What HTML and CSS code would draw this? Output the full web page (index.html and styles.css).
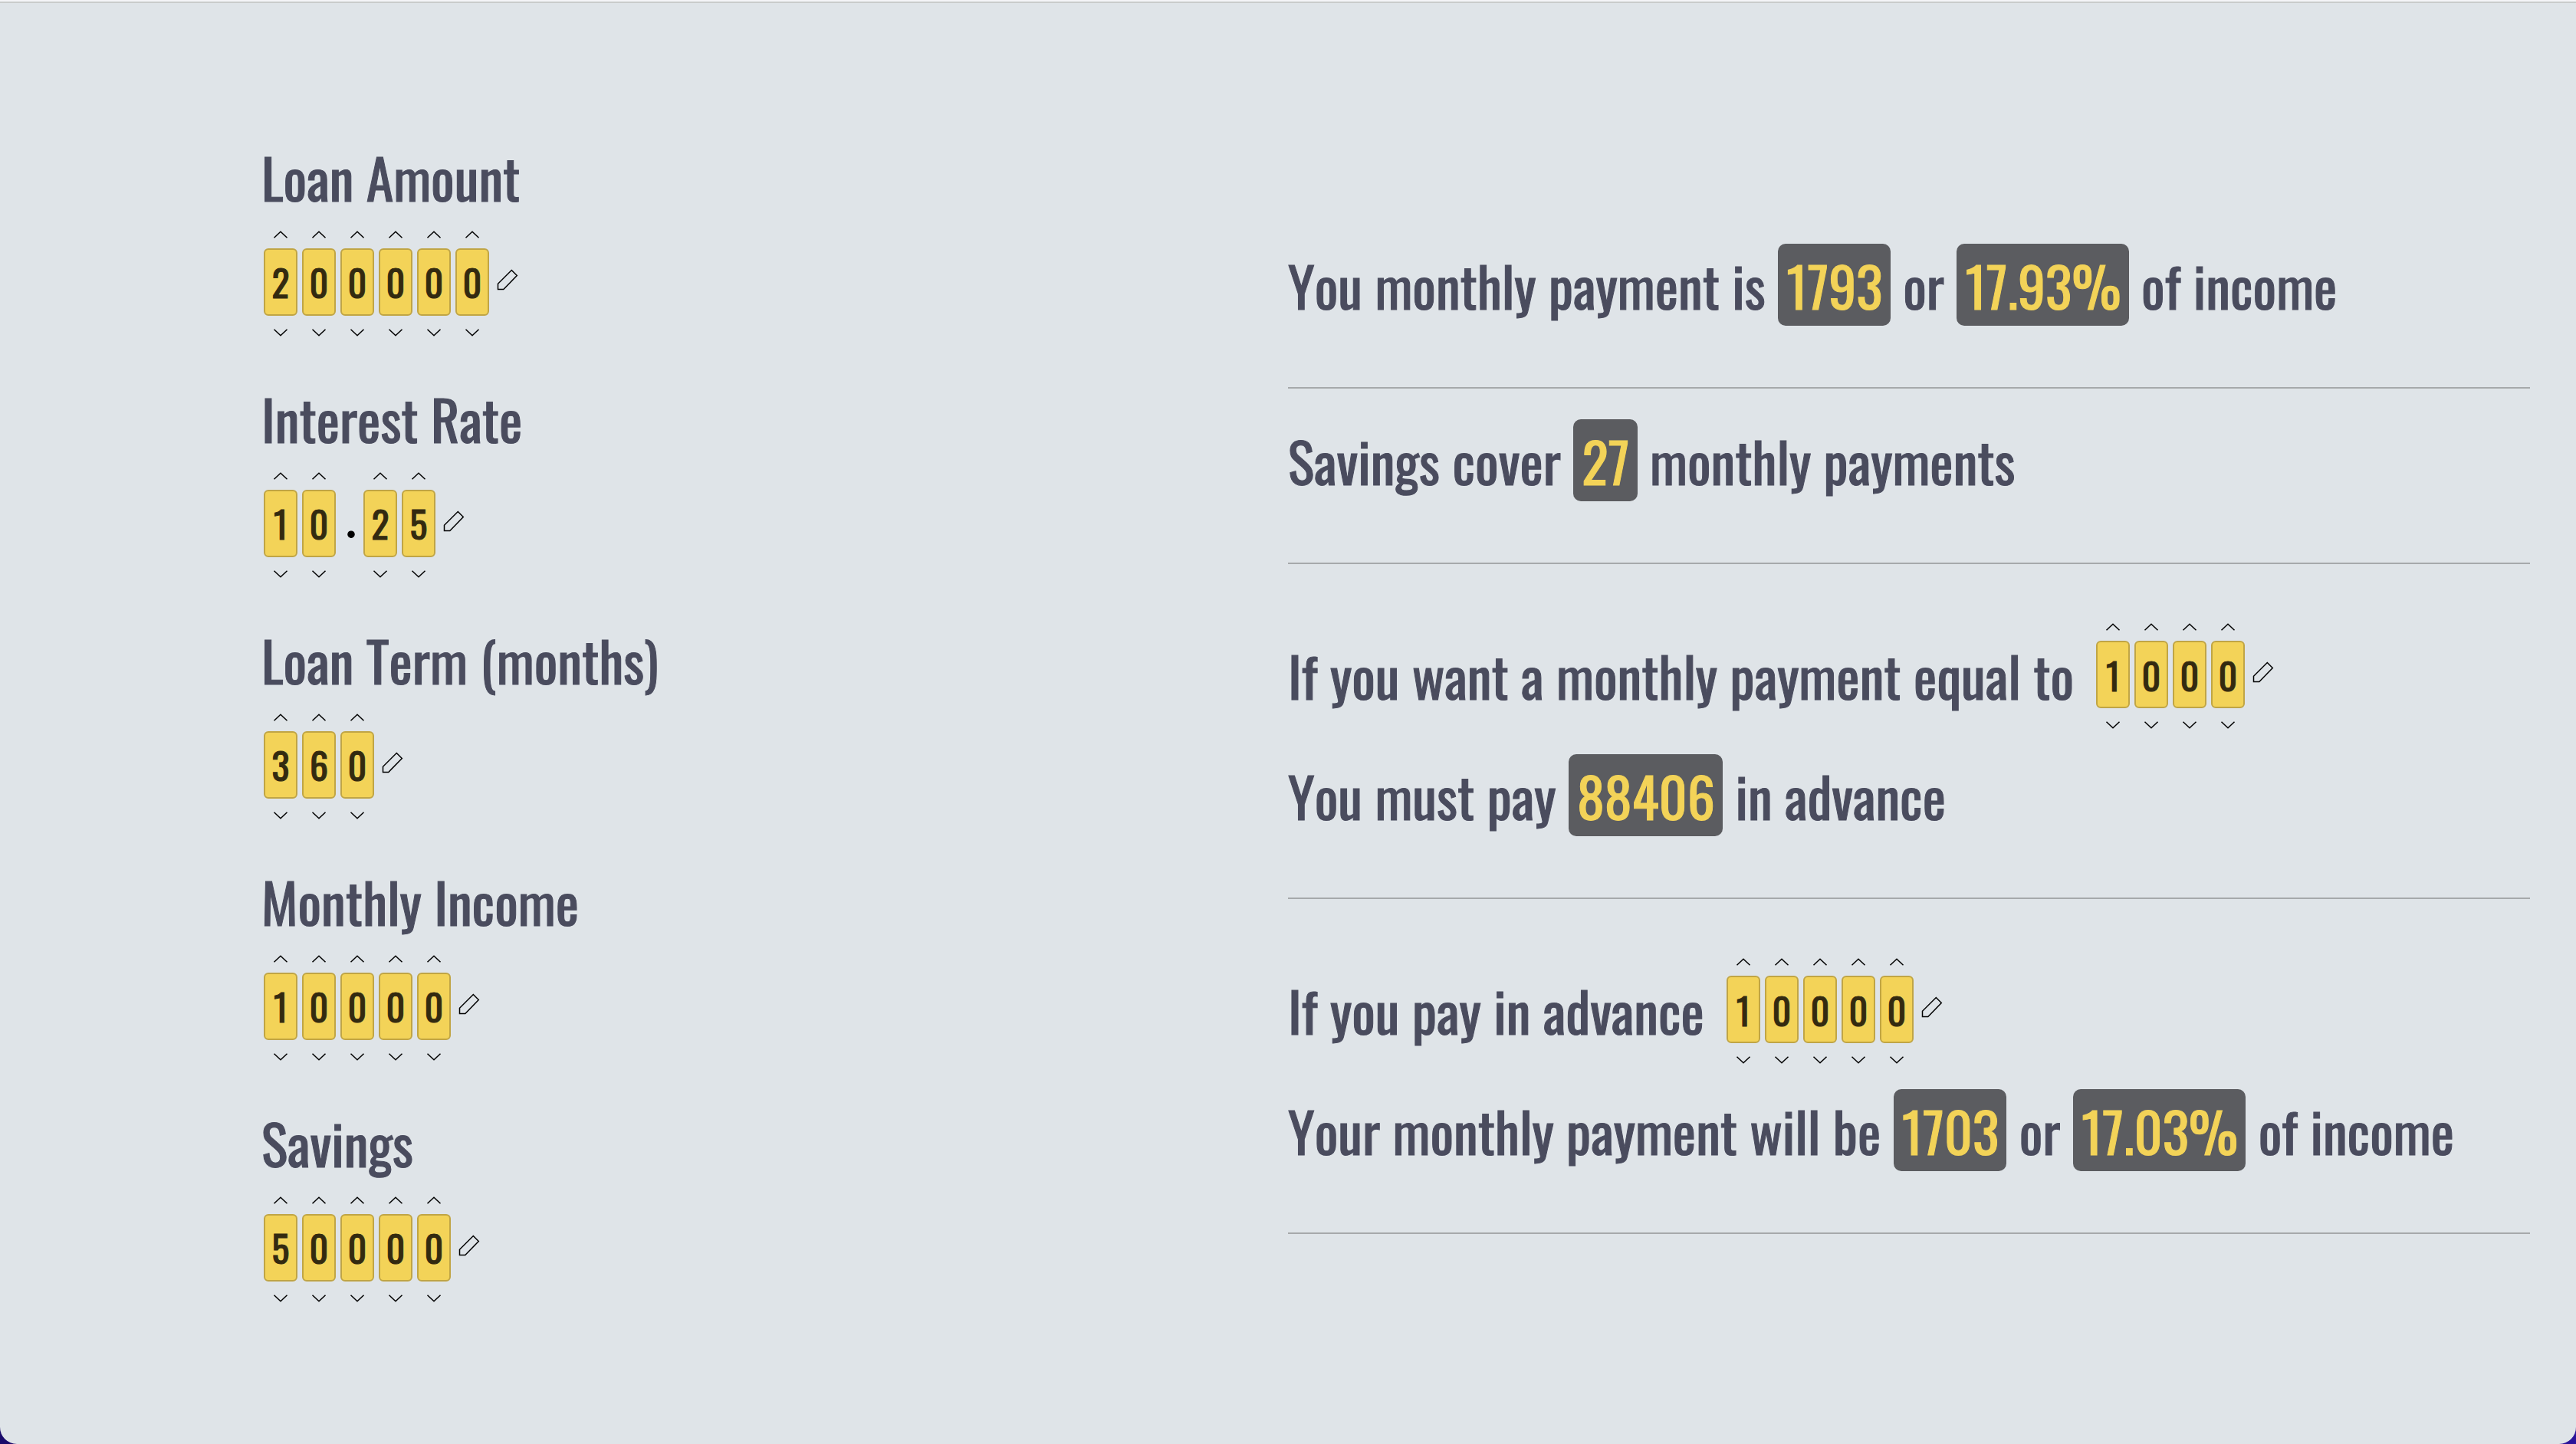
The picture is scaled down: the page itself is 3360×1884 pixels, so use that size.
FILE: index.html
```html
<!DOCTYPE html>
<html lang="en">
<head>
<meta charset="utf-8">
<title>Loan calculator</title>
<link rel="stylesheet" href="styles.css">
</head>
<body>
<svg class="sprite" aria-hidden="true">
  <symbol id="up" viewBox="0 0 20 10"><path d="M1.5 9.3 10 1.2l8.500 8.100"/></symbol>
  <symbol id="down" viewBox="0 0 20 10"><path d="M1.5.700 10 8.800l8.500-8.100"/></symbol>
  <symbol id="pencil" viewBox="0 0 28 28"><path d="M19.300 1.500l7 7L8.800 26.400H1.500v-7.200z"/></symbol>
</svg>
<main class="page">
  <form class="inputs" id="loan"></form>
  <section class="results" id="results">
    <div class="result">
      <p class="line">You monthly payment is <output class="chip">1793</output> or <output class="chip">17.93%</output> of income</p>
    </div>
    <div class="result">
      <p class="line">Savings cover <output class="chip">27</output> monthly payments</p>
    </div>
    <div class="result">
      <div class="line line-picker"><label for="target-0">If you want a monthly payment equal to</label><div class="picker" data-id="target" data-value="1000"></div></div>
      <p class="line">You must pay <output class="chip">88406</output> in advance</p>
    </div>
    <div class="result">
      <div class="line line-picker"><label for="advance-0">If you pay in advance</label><div class="picker" data-id="advance" data-value="10000"></div></div>
      <p class="line">Your monthly payment will be <output class="chip">1703</output> or <output class="chip">17.03%</output> of income</p>
    </div>
  </section>
</main>
<script src="app.js"></script>
</body>
</html>
```
FILE: styles.css
```css
* {
  box-sizing: border-box;
}

html {
  background: linear-gradient(90deg, #1a0a6b, #2a139a);
}

body {
  margin: 0;
  font-family: Oswald, "Roboto Condensed", sans-serif;
  font-size: 72px;
  font-kerning: none;
  line-height: 107px;
  color: #4a4c5e;
  -webkit-text-stroke: 1px currentColor;
}

.sprite {
  display: none;
}

.page {
  display: flex;
  align-items: center;
  min-height: 100vh;
  padding-top: 2px;
  border-top: 2px solid #f5f5f8;
  border-radius: 0 0 22px 22px;
  background: #dfe4e8;
  box-shadow: inset 0 2px #c9cccb;
}

.inputs,
.results {
  width: 50%;
}

.inputs {
  padding: 40px 60px 0 341px;
}

.results {
  padding-right: 60px;
}

.field {
  margin-bottom: 40px;
}

.field label {
  display: block;
}

.result {
  padding: 40px 0 80px;
  border-bottom: 2px solid #a6a9ab;
}

.line {
  margin: 0;
}

.line-picker {
  display: flex;
  align-items: center;
  gap: 26px;
  padding: 20px 0;
}

.chip {
  display: inline-block;
  padding: 0 10px 0 11px;
  border-radius: 10px;
  background: #5b5c60;
  color: #f3d358;
}

.picker {
  display: flex;
}

.digit {
  display: flex;
  flex-direction: column;
  width: 50px;
  padding: 0 3px;
}

.digit input {
  width: 44px;
  height: 88px;
  padding: 0;
  border: 2px solid #c0a545;
  border-radius: 6px;
  background: #f3d358;
  color: #332a10;
  font: inherit;
  font-size: 48px;
  text-align: center;
  -webkit-text-stroke: 1px currentColor;
}

button {
  padding: 0;
  border: 0;
  background: none;
  cursor: pointer;
}

svg {
  display: block;
  fill: none;
  stroke: #000;
  stroke-width: 1.5;
}

.step {
  height: 40px;
  padding: 17px 12px 13px;
}

.step svg {
  width: 20px;
  height: 10px;
}

.point {
  padding: 40px 4px 0 8px;
  font-family: "Liberation Serif", serif;
  line-height: 76px;
  color: #000;
}

.edit {
  padding: 0 0 6px 7px;
}

.edit svg {
  width: 28px;
  height: 28px;
}
```
FILE: app.js
```javascript
const fields = [
  ["amount", "Loan Amount", "200000"],
  ["rate", "Interest Rate", "10.25"],
  ["term", "Loan Term (months)", "360"],
  ["income", "Monthly Income", "10000"],
  ["savings", "Savings", "50000"],
];

const icon = (name) => `<svg aria-hidden="true"><use href="#${name}"/></svg>`;

const digit = (id, n, i) => `<div class="digit">
  <button class="step" type="button" aria-label="Increase digit">${icon("up")}</button>
  <input id="${id}-${i}" value="${n}" maxlength="1" inputmode="numeric" aria-label="Digit ${i + 1}">
  <button class="step" type="button" aria-label="Decrease digit">${icon("down")}</button>
</div>`;

document.getElementById("loan").innerHTML = fields
  .map(([id, label, value]) => `<div class="field">
    <label for="${id}-0">${label}</label>
    <div class="picker" data-id="${id}" data-value="${value}"></div>
  </div>`)
  .join("");

document.querySelectorAll(".picker").forEach((picker) => {
  const { id, value } = picker.dataset;
  picker.innerHTML = [...value]
    .map((c, i) => (c === "." ? '<span class="point">.</span>' : digit(id, c, i)))
    .join("") + `<button class="edit" type="button" aria-label="Edit value">${icon("pencil")}</button>`;
});
```
